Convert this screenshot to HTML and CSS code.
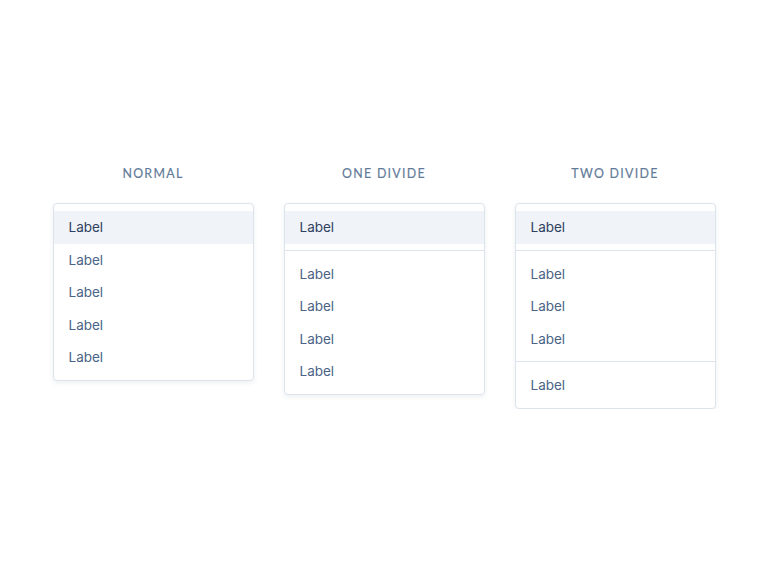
FILE: index.html
```html
<!DOCTYPE html>
<html>
<head>
<meta charset="utf-8">
<link rel="stylesheet" href="styles.css">
</head>
<body>
<main class="stage">
  <section class="column">
    <h2 class="title">NORMAL</h2>
    <div class="menu">
      <ul class="group">
        <li class="item active">Label</li>
        <li class="item">Label</li>
        <li class="item">Label</li>
        <li class="item">Label</li>
        <li class="item">Label</li>
      </ul>
    </div>
  </section>
  <section class="column">
    <h2 class="title">ONE DIVIDE</h2>
    <div class="menu">
      <ul class="group">
        <li class="item active">Label</li>
      </ul>
      <ul class="group">
        <li class="item">Label</li>
        <li class="item">Label</li>
        <li class="item">Label</li>
        <li class="item">Label</li>
      </ul>
    </div>
  </section>
  <section class="column">
    <h2 class="title">TWO DIVIDE</h2>
    <div class="menu">
      <ul class="group">
        <li class="item active">Label</li>
      </ul>
      <ul class="group">
        <li class="item">Label</li>
        <li class="item">Label</li>
        <li class="item">Label</li>
      </ul>
      <ul class="group">
        <li class="item">Label</li>
      </ul>
    </div>
  </section>
</main>
</body>
</html>
```
FILE: styles.css
```css
html, body {
  margin: 0;
  padding: 0;
  background: #ffffff;
}
.stage {
  display: flex;
  justify-content: center;
  align-items: flex-start;
  gap: 30px;
  padding-top: 166px;
}
.column {
  width: 201px;
  display: flex;
  flex-direction: column;
}
.title {
  margin: 0 0 21px;
  height: 16px;
  line-height: 16px;
  text-align: center;
  font-family: Lato, "Noto Sans", sans-serif;
  font-weight: 400;
  font-size: 12.4px;
  letter-spacing: 1.3px;
  color: #627a99;
  -webkit-text-stroke: 0.15px #627a99;
}
.menu {
  background: #fff;
  border: 1px solid #dce3ec;
  border-radius: 4px;
  box-shadow: 0 2px 5px rgba(40, 60, 90, 0.08);
}
.group {
  list-style: none;
  margin: 0;
  padding: 7px 0 6px;
}
.group + .group {
  border-top: 1px solid #dce3ec;
}
.item {
  height: 32.6px;
  line-height: 32.6px;
  padding-left: 15px;
  font-family: Inter, "Noto Sans", sans-serif;
  font-size: 13.5px;
  color: #4a6386;
}
.item.active {
  background: #f0f3f8;
  color: #2e4160;
}
```
